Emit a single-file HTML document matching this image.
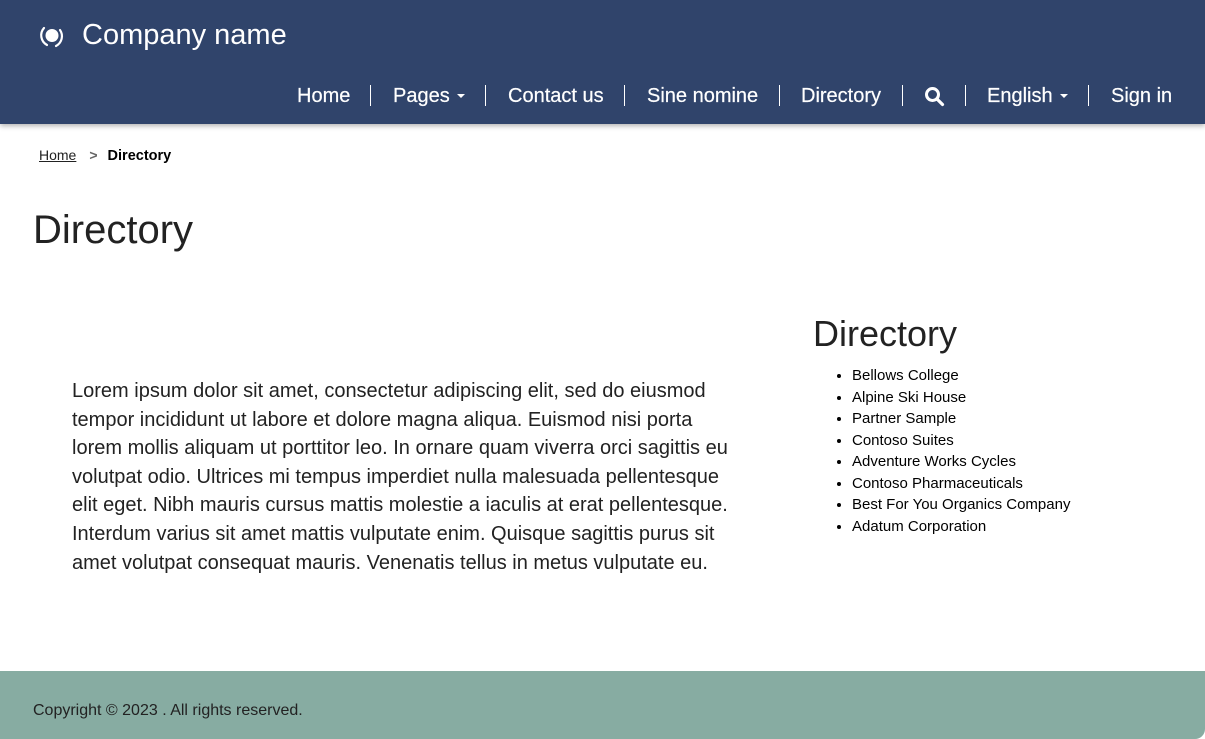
<!DOCTYPE html>
<html><head><meta charset="utf-8"><style>
body{margin:0;width:1205px;height:739px;overflow:hidden;font-family:"Liberation Sans",Arial,sans-serif;background:#fff;position:relative;color:#333}
.hdr{position:absolute;left:0;top:0;width:1205px;height:124px;background:#30446b;box-shadow:0 2px 5px rgba(0,0,0,.3)}
.t{position:absolute;color:#fff;white-space:nowrap}
.sep{position:absolute;top:85px;width:1px;height:21px;background:#fff}
.nav{font-size:20px;top:85px;-webkit-text-stroke:0.2px #fff}
.car{display:inline-block;width:0;height:0;border-left:4px solid transparent;border-right:4px solid transparent;border-top:4px solid #fff;vertical-align:middle;margin-left:7px;position:relative;top:-1px}
ul{position:absolute;left:834px;top:365px;margin:0;padding:0 0 0 18px;font-size:15px;color:#000;line-height:21.5px}
.foot{position:absolute;left:0;top:671px;width:1205px;height:68px;background:#87aca2;border-bottom-right-radius:10px}
</style></head><body>
<div class="hdr">
<svg style="position:absolute;left:38px;top:22px" width="28" height="28" viewBox="0 0 28 28"><circle cx="14" cy="13.5" r="6.5" fill="#fff"/><path d="M6 6 A11 11 0 0 0 9 23" stroke="#fff" stroke-width="2.2" fill="none" stroke-linecap="round"/><path d="M22 8 A11 11 0 0 1 18 24" stroke="#fff" stroke-width="2.2" fill="none" stroke-linecap="round"/></svg>
<div class="t" style="left:82px;top:19px;font-size:29px">Company name</div>
<div class="t nav" style="left:297px">Home</div><div class="sep" style="left:370px"></div>
<div class="t nav" style="left:393px">Pages<span class="car"></span></div><div class="sep" style="left:485px"></div>
<div class="t nav" style="left:508px">Contact us</div><div class="sep" style="left:624px"></div>
<div class="t nav" style="left:647px">Sine nomine</div><div class="sep" style="left:779px"></div>
<div class="t nav" style="left:801px">Directory</div><div class="sep" style="left:902px"></div>
<svg style="position:absolute;left:924px;top:86px" width="21" height="21" viewBox="0 0 21 21"><circle cx="8.5" cy="8.5" r="6" stroke="#fff" stroke-width="3" fill="none"/><path d="M13 13 L18.5 18.5" stroke="#fff" stroke-width="3.2" stroke-linecap="round"/></svg>
<div class="sep" style="left:965px"></div>
<div class="t nav" style="left:987px">English<span class="car"></span></div><div class="sep" style="left:1088px"></div>
<div class="t nav" style="left:1111px">Sign in</div>
</div>
<div style="position:absolute;left:39px;top:147px;font-size:14px;color:#222"><span style="text-decoration:underline">Home</span><span style="color:#666;font-weight:bold;margin:0 10px 0 13px">&gt;</span><b style="color:#000;font-size:14.5px">Directory</b></div>
<div style="position:absolute;left:33px;top:208px;font-size:40px;color:#222">Directory</div>
<div style="position:absolute;left:72px;top:377px;width:660px;font-size:20px;line-height:28.6px;color:#222">Lorem ipsum dolor sit amet, consectetur adipiscing elit, sed do eiusmod tempor incididunt ut labore et dolore magna aliqua. Euismod nisi porta lorem mollis aliquam ut porttitor leo. In ornare quam viverra orci sagittis eu volutpat odio. Ultrices mi tempus imperdiet nulla malesuada pellentesque elit eget. Nibh mauris cursus mattis molestie a iaculis at erat pellentesque. Interdum varius sit amet mattis vulputate enim. Quisque sagittis purus sit amet volutpat consequat mauris. Venenatis tellus in metus vulputate eu.</div>
<div style="position:absolute;left:813px;top:313px;font-size:36px;color:#222">Directory</div>
<ul><li>Bellows College</li><li>Alpine Ski House</li><li>Partner Sample</li><li>Contoso Suites</li><li>Adventure Works Cycles</li><li>Contoso Pharmaceuticals</li><li>Best For You Organics Company</li><li>Adatum Corporation</li></ul>
<div class="foot"><div style="position:absolute;left:33px;top:31px;font-size:16px;color:#222">Copyright © 2023 . All rights reserved.</div></div>
</body></html>
